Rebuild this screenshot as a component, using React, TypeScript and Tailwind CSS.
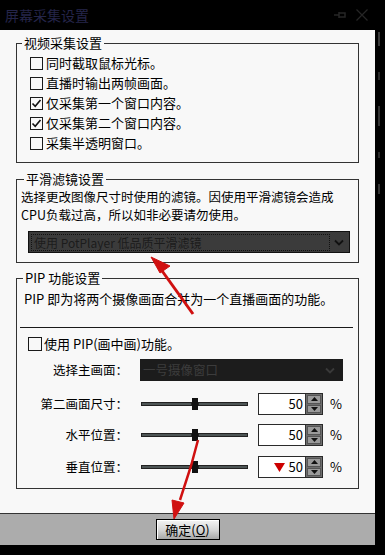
import React from "react";

const Check = ({ checked, size = 13 }: { checked?: boolean; size?: number }) => (
  <span
    className="inline-flex items-center justify-center border border-[#1a1a1a] bg-[#f8f8f8] shrink-0"
    style={{ width: size, height: size }}
  >
    {checked && (
      <svg width="11" height="11" viewBox="0 0 11 11">
        <path d="M1.5 5.5 L4.2 8.3 L9.5 2" fill="none" stroke="#111" strokeWidth="1.6" />
      </svg>
    )}
  </span>
);

const Chevron = ({ color }: { color: string }) => (
  <svg width="10" height="7" viewBox="0 0 10 7">
    <path d="M1 1.5 L5 5.5 L9 1.5" fill="none" stroke={color} strokeWidth="1.8" />
  </svg>
);

const SpinArrow = ({ up }: { up?: boolean }) => (
  <svg width="7" height="4" viewBox="0 0 7 4">
    <path d={up ? "M0 4 L3.5 0 L7 4 Z" : "M0 0 L7 0 L3.5 4 Z"} fill="#111" />
  </svg>
);

const SliderRow = ({
  label,
  marker,
  className,
}: {
  label: string;
  marker?: boolean;
  className?: string;
}) => (
  <div className={`flex items-center h-[22px] ${className ?? ""}`}>
    <div className="w-[111px] text-right text-[12.5px] leading-[16px]">{label}</div>
    <div className="ml-[13px] w-[107px] h-[12px] flex items-center">
      <div className="flex-1 h-[4px] bg-[#4d5555] border border-[#222]" />
      <div className="w-[6px] h-[12px] bg-[#111]" />
      <div className="flex-1 h-[4px] bg-[#4d5555] border border-[#222]" />
    </div>
    <div className="ml-[10px] w-[65px] h-[22px] border border-[#2a2a2a] bg-white flex">
      <div className="flex-1 flex items-center justify-end pr-[2px] leading-[16px] text-[13px]">
        {marker && (
          <svg width="11" height="9" viewBox="0 0 11 9" className="mr-[4px]">
            <path d="M0 0 L11 0 L5.5 9 Z" fill="#cc0000" />
          </svg>
        )}
        50
      </div>
      <div className="w-[17px] bg-[#6e6e6e] border-l border-[#333] flex flex-col p-[1px] gap-[1px]">
        <div className="flex-1 bg-[#9a9a9a] border border-[#555] flex items-center justify-center">
          <SpinArrow up />
        </div>
        <div className="flex-1 bg-[#9a9a9a] border border-[#555] flex items-center justify-center">
          <SpinArrow />
        </div>
      </div>
    </div>
    <span className="ml-[7px] text-[13px] leading-[16px]">%</span>
  </div>
);

const App = () => {
  const videoOptions = [
    { text: "同时截取鼠标光标。", checked: false },
    { text: "直播时输出两帧画面。", checked: false },
    { text: "仅采集第一个窗口内容。", checked: true },
    { text: "仅采集第二个窗口内容。", checked: true },
    { text: "采集半透明窗口。", checked: false },
  ];

  return (
    <div className="w-[385px] h-[555px] bg-black relative overflow-hidden text-black text-[13px] font-['Noto_Sans_CJK_SC','Noto_Sans',sans-serif]">
      {/* title bar */}
      <div className="h-[30px] flex items-center pl-[5px] pr-[17px]">
        <span className="text-[14px] text-[#25254a] leading-[16px]">屏幕采集设置</span>
        <div className="ml-auto flex items-center gap-[10px]">
          <svg width="12" height="8" viewBox="0 0 12 8">
            <path d="M0 4 H5 M5 1 V7 M5 2 H11 V6 H5" fill="none" stroke="#262626" strokeWidth="1.5" />
          </svg>
          <svg width="12" height="12" viewBox="0 0 12 12">
            <path d="M0.5 0.5 L11.5 11.5 M11.5 0.5 L0.5 11.5" stroke="#262626" strokeWidth="1.2" />
          </svg>
        </div>
      </div>

      <div className="flex">
        <div className="w-[375px]">
          <div className="h-[483px] bg-[#f8f8f8] px-[16px] pt-[5px]">
            {/* video capture */}
            <fieldset className="border border-[#333] pb-[9px]">
              <legend className="ml-[5px] px-[2px] text-[13px] leading-[16px]">视频采集设置</legend>
              <div className="mt-[2px]">
                {videoOptions.map((o) => (
                  <div key={o.text} className="h-[20px] flex items-center pl-[13px] gap-[3px] leading-[16px]">
                    <Check checked={o.checked} />
                    <span>{o.text}</span>
                  </div>
                ))}
              </div>
            </fieldset>

            {/* smoothing filter */}
            <fieldset className="border border-[#333] mt-[8px] pb-[9px]">
              <legend className="ml-[7px] px-[2px] text-[13px] leading-[16px]">平滑滤镜设置</legend>
              <div className="mt-[1px] pl-[4px] text-[12.5px] leading-[18px] whitespace-nowrap">
                <div>选择更改图像尺寸时使用的滤镜。因使用平滑滤镜会造成</div>
                <div>CPU负载过高，所以如非必要请勿使用。</div>
              </div>
              <div className="mt-[7px] ml-[11px] w-[322px] h-[22px] bg-[#3b3b3b] border border-[#111] flex items-center p-[2px]">
                <div className="w-[299px] h-[17px] border border-dotted border-[#111] flex items-center pl-[2px] text-[12px] text-[#1c1c1c] leading-[15px]">
                  使用 PotPlayer 低品质平滑滤镜
                </div>
                <div className="flex-1 flex justify-center">
                  <Chevron color="#111" />
                </div>
              </div>
            </fieldset>

            {/* PIP */}
            <fieldset className="border border-[#333] mt-[7px] pb-[10px]">
              <legend className="ml-[6px] px-[2px] text-[13px] leading-[16px]">PIP 功能设置</legend>
              <div className="mt-[5px] pl-[7px] leading-[16px]">PIP 即为将两个摄像画面合并为一个直播画面的功能。</div>
              <div className="mt-[20px] ml-[3px] mr-[5px] h-[1px] bg-[#1a1a1a]" />
              <div className="mt-[6px] h-[20px] flex items-center pl-[11px] gap-[2px] leading-[16px]">
                <Check size={14} />
                <span>使用 PIP(画中画)功能。</span>
              </div>
              <div className="mt-[5px] flex items-center h-[22px]">
                <div className="w-[111px] text-right text-[12.5px] leading-[16px]">选择主画面：</div>
                <div className="ml-[12px] w-[203px] h-[22px] bg-[#1c1c1c] flex items-center pl-[3px] pr-[8px] text-[12.5px] text-[#3c3c3c] leading-[16px]">
                  一号摄像窗口
                  <span className="ml-auto">
                    <Chevron color="#3a3a3a" />
                  </span>
                </div>
              </div>
              <SliderRow label="第二画面尺寸：" className="mt-[12px]" />
              <SliderRow label="水平位置：" className="mt-[9px]" />
              <SliderRow label="垂直位置：" className="mt-[10px]" marker />
            </fieldset>
          </div>

          {/* bottom bar */}
          <div className="h-[32px] bg-[#acacac] border-t border-[#333] flex justify-center pt-[5px]">
            <button className="w-[64px] h-[21px] border border-black bg-gradient-to-b from-[#f4f4f4] via-[#d8d8d8] to-[#a8a8a8] shadow-[inset_1px_1px_0_#fff] text-[13px] leading-[16px] text-black">
              确定(<span className="underline">O</span>)
            </button>
          </div>
        </div>

        {/* right edge */}
        <div className="w-[10px] flex flex-col pt-[2px] gap-[26px] pl-[3px]">
          <div className="w-[2px] h-[14px] bg-[#3a3a3a]" />
          <div className="w-[2px] h-[8px] bg-[#2a2a2a]" />
          <div className="w-[2px] h-[20px] bg-[#333]" />
          <div className="w-[2px] h-[6px] bg-[#2a2a2a]" />
          <div className="w-[2px] h-[10px] bg-[#333]" />
        </div>
      </div>

      {/* red annotation arrows */}
      <svg className="absolute inset-0 pointer-events-none" width="385" height="555" viewBox="0 0 385 555">
        <path d="M193 314 L160 268" stroke="#d01010" strokeWidth="3" />
        <path d="M151 257 L170 266 L160 273 Z" fill="#d01010" stroke="#d01010" strokeWidth="1" />
        <path d="M198 440 L191 466 L180 500" stroke="#d01010" strokeWidth="2.5" />
        <path d="M174 519 L172 500 L184 503 Z" fill="#d01010" stroke="#d01010" strokeWidth="1" />
      </svg>
    </div>
  );
};

export default App;
